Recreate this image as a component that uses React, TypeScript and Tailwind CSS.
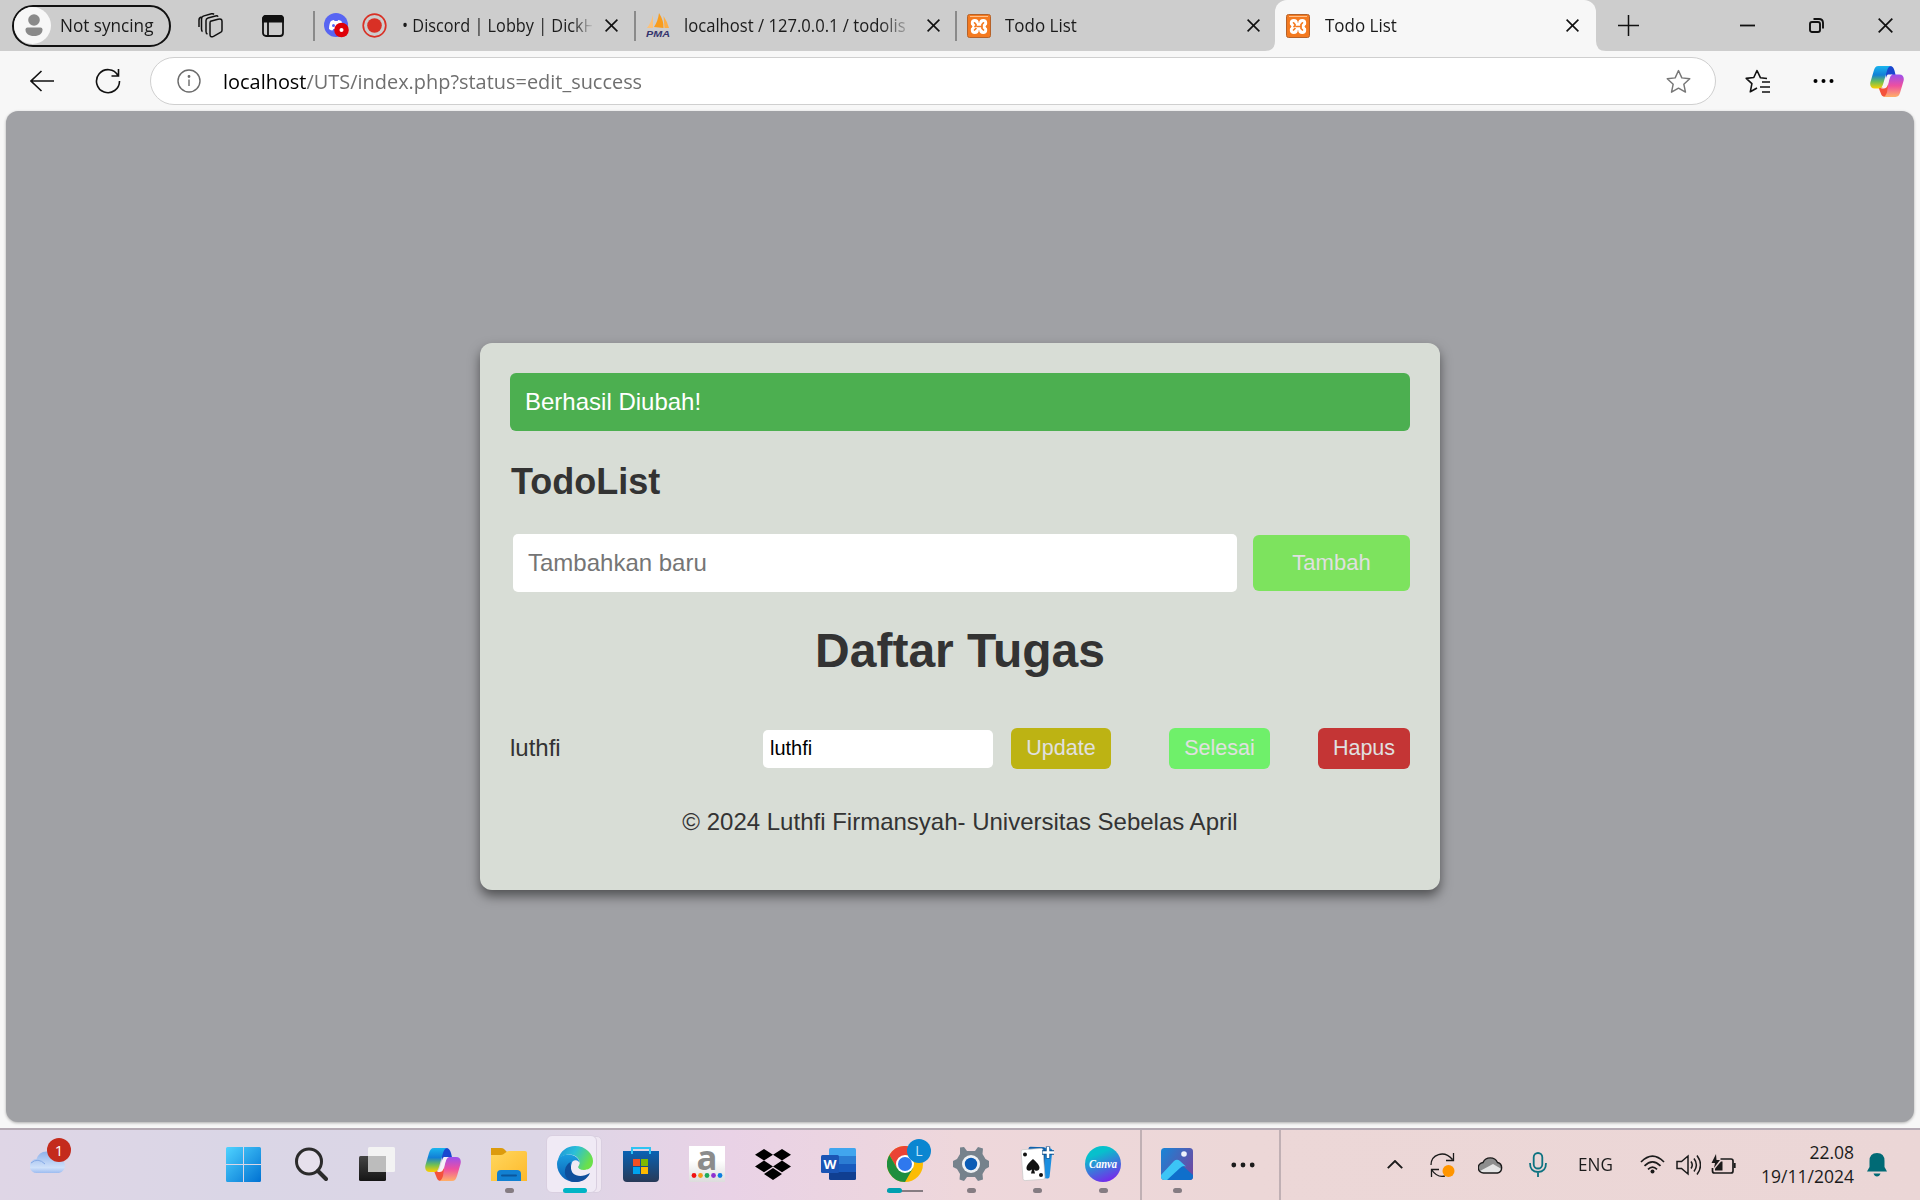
import type { ReactNode } from "react";

const ui = "font-['Open_Sans','Noto_Sans',sans-serif]";

function Close({ s = 13, w = 1.6 }: { s?: number; w?: number }) {
  return (
    <svg width={s} height={s} viewBox="0 0 13 13" fill="none" stroke="#111" strokeWidth={w}>
      <path d="M.6.6 12.4 12.4M12.4.6.6 12.4" />
    </svg>
  );
}

function Xampp() {
  return (
    <svg width="24" height="24" viewBox="0 0 24 24">
      <rect x=".5" y=".5" width="23" height="23" rx="2" fill="#f47a20" stroke="#b5622a" />
      <path d="M3 2.500h18" stroke="#ffc08a" />
      <g fill="#fff">
        <circle cx="7.800" cy="9" r="4" />
        <circle cx="16.200" cy="9" r="4" />
        <circle cx="7.800" cy="16" r="4" />
        <circle cx="16.200" cy="16" r="4" />
        <path d="M6 9h12v7H6Z" />
      </g>
      <path d="M3 12.500 5 11v3ZM21 12.500 19 11v3Z" fill="#f47a20" />
      <path d="M7.500 8.800 9 10.500v1.500l-1 .6M7.500 16 9 14.500M16.500 8.800 15 10.500v4l1.500 1.500M10.500 12.500H15" fill="none" stroke="#f47a20" strokeWidth="1.700" strokeLinecap="round" />
    </svg>
  );
}

function Copilot({ id, w = 36, h = 33 }: { id: string; w?: number; h?: number }) {
  return (
    <svg width={w} height={h} viewBox="0 0 36 33" preserveAspectRatio="none">
      <defs>
        <linearGradient id={id + "a"} x1="0" y1="0" x2="0" y2="1">
          <stop offset="0" stopColor="#19b5ee" />
          <stop offset=".4" stopColor="#127fd6" />
          <stop offset=".7" stopColor="#6fbf55" />
          <stop offset="1" stopColor="#ffd000" />
        </linearGradient>
        <linearGradient id={id + "b"} x1="0" y1="0" x2="0" y2="1">
          <stop offset="0" stopColor="#9b50ee" />
          <stop offset=".5" stopColor="#ee4fa0" />
          <stop offset="1" stopColor="#ffb067" />
        </linearGradient>
      </defs>
      <path d="M16 0h5c3 0 4 2 5 5l1.200 5H22c-3 0-4 2-5 5Z" fill="#1a47cf" />
      <path d="M9 23h6c2 0 3-1 4-4l1 14h-4c-3 0-4-2-5-5Z" fill="#f4523b" />
      <path d="M9 0h13c-2 .5-3 2-4 5l-4 14c-1 3-2 5-5 5H5c-4 0-5.500-3-4.500-7L4 5c1-3 2-5 5-5Z" fill={"url(#" + id + "a)"} />
      <path d="M23 9h8c4 0 5.500 3 4.500 7L32 28c-1 3-2 5-5 5H14c2-.5 3-2 4-5l2-14c1-3 1.500-5 3-5Z" fill={"url(#" + id + "b)"} />
      <path d="M19 9h5c-2 .8-2.500 2-3.400 5l-2 6.500c-.8 2.500-2 3.500-4 3.500h-3c2-.8 2.600-2 3.400-5l2-6.500c.5-1.700 1-3 2-3.500Z" fill="#f6f0f8" />
    </svg>
  );
}

function TabBar() {
  return (
    <div className="flex h-[51px] bg-[#cdcdcd] text-[17.500px] text-[#1b1b1b]">
      <div className="flex w-[313px] shrink-0 items-center pl-3">
        <div className="flex h-[42px] w-[159px] items-center rounded-full border-2 border-[#111]">
          <svg width="37" height="37" viewBox="0 0 37 37">
            <circle cx="18.500" cy="18.500" r="18.500" fill="#f7f7f7" />
            <circle cx="20" cy="13" r="5.800" fill="#8a8a8a" />
            <path d="M13.500 20.500h13a2 2 0 0 1 2 2c0 4-3 6.500-8.500 6.500s-8.500-2.500-8.500-6.500a2 2 0 0 1 2-2Z" fill="#8a8a8a" />
          </svg>
          <span className="ml-[9px] origin-left scale-x-[.98] whitespace-nowrap">Not syncing</span>
        </div>
        <svg className="ml-[27px]" width="25" height="25" viewBox="0 0 25 25" fill="none" stroke="#111" strokeWidth="1.500" strokeLinejoin="round">
          <path d="M12.500 8.300 20 6.200q4-.9 4 2v9q0 1.500-1.500 2.200l-7 4q-3.500 1.500-3.500-2v-11q0-1.600.5-2.100Z" />
          <path d="M20 3.800q-.5-1.300-2.500-.8L10 5q-2 .6-2 2.500v11q0 2 1.500 2.500M16 1.400q-1-1-2.500-.6L6 2.900Q3.500 3.600 3.500 6v10q0 2 1 2.600M3.500 4Q1 4.500 1 7v7" />
        </svg>
        <svg className="ml-[39px]" width="22" height="22" viewBox="0 0 22 22" fill="none" stroke="#111" strokeWidth="1.800">
          <rect x="1" y="1" width="20" height="20" rx="3" />
          <path d="M1 4q0-3 3-3h14q3 0 3 3v2.500H1Z" fill="#111" />
          <path d="M6 7v14" />
        </svg>
      </div>
      <div className="flex w-[321px] shrink-0 items-center">
        <i className="h-[30px] w-[2px] bg-[#8a8a8a]" />
        <svg className="ml-[9px]" width="25" height="25" viewBox="0 0 25 25">
          <circle cx="12" cy="12" r="12" fill="#5865f2" />
          <path d="M5 16c0-4 1-7 2-8q2-1 3-1l.6 1h3l.6-1q1 0 3 1c1 1 2 4 2 8q-2 1.500-3.500 1.600l-1-1.500H9.500l-1 1.500Q7 17.500 5 16Z" fill="#fff" />
          <circle cx="9.500" cy="12.500" r="1.500" fill="#5865f2" />
          <circle cx="17.500" cy="17" r="7.300" fill="#df0008" />
          <circle cx="17.500" cy="17" r="2" fill="#fff" />
        </svg>
        <svg className="ml-[13px]" width="25" height="25" viewBox="0 0 25 25">
          <circle cx="12.500" cy="12.500" r="11.300" fill="none" stroke="#d93025" strokeWidth="1.700" />
          <circle cx="12.500" cy="12.500" r="7.300" fill="#d93025" />
        </svg>
        <div className="ml-[15px] w-[190px] [mask-image:linear-gradient(90deg,#000_90%,transparent_101%)]">
          <span className="block w-[200px] origin-left scale-x-[.93] whitespace-nowrap">• Discord | Lobby | DickH</span>
        </div>
        <div className="ml-[13px]"><Close /></div>
      </div>
      <div className="flex w-[321px] shrink-0 items-center">
        <i className="h-[30px] w-[2px] bg-[#8a8a8a]" />
        <svg className="ml-[9px]" width="26" height="25" viewBox="0 0 26 25">
          <path d="M8 2v13H2Q6 10 8 2Z" fill="#fbc27b" />
          <path d="M14 0q5 8 4.500 15L9 14q4-6 5-14Z" fill="#f89c1c" />
          <path d="M18.500 3q4 6 5.500 12h-4.500Z" fill="#fdae45" />
          <text x="1" y="24" fontSize="9.500" fontStyle="italic" fontWeight="bold" fill="#35356e" textLength="24" lengthAdjust="spacingAndGlyphs" fontFamily="Liberation Sans">PMA</text>
        </svg>
        <div className="ml-[13px] w-[228px] [mask-image:linear-gradient(90deg,#000_86%,transparent_101%)]">
          <span className="block w-[240px] origin-left scale-x-[.95] whitespace-nowrap">localhost / 127.0.0.1 / todolis</span>
        </div>
        <div className="ml-[15px]"><Close /></div>
      </div>
      <div className="flex w-[320px] shrink-0 items-center">
        <i className="h-[30px] w-[2px] bg-[#8a8a8a]" />
        <div className="ml-[10px]"><Xampp /></div>
        <span className="ml-[14px] origin-left scale-x-[.97]">Todo List</span>
        <div className="mr-[15px] ml-auto"><Close /></div>
      </div>
      <div className="relative flex w-[321px] shrink-0 items-center rounded-t-[12px] bg-[#f7f7f7] pl-[11px]">
        <svg className="absolute bottom-0 -left-[10px]" width="10" height="10"><path d="M10 0v10H0Q10 10 10 0Z" fill="#f7f7f7" /></svg>
        <svg className="absolute -right-[10px] bottom-0" width="10" height="10"><path d="M0 0v10h10Q0 10 0 0Z" fill="#f7f7f7" /></svg>
        <Xampp />
        <span className="ml-[15px] origin-left scale-x-[.97]">Todo List</span>
        <div className="mr-[17px] ml-auto"><Close /></div>
      </div>
      <div className="flex flex-1 items-center pl-[22px]">
        <svg width="21" height="21" viewBox="0 0 21 21" stroke="#111" strokeWidth="1.500"><path d="M10.500 0v21M0 10.500h21" /></svg>
        <svg className="ml-[101px]" width="15" height="15" viewBox="0 0 15 15" stroke="#111" strokeWidth="1.800"><path d="M0 7.500h15" /></svg>
        <svg className="ml-[54px]" width="15" height="15" viewBox="0 0 15 15" fill="none" stroke="#111" strokeWidth="1.900">
          <rect x="1" y="4" width="10" height="10" rx="2" />
          <path d="M4.500 1H10q4 0 4 4v5.500" />
        </svg>
        <div className="ml-[54px]"><Close s={15} w={1.5} /></div>
      </div>
    </div>
  );
}

const star = "M12 1.500 15.200 8.500 22.800 9.400 17.100 14.600 18.700 22.200 12 18.400 5.300 22.200 6.900 14.600 1.200 9.400 8.800 8.500Z";

function Toolbar() {
  return (
    <div className="flex h-[60px] items-center bg-[#f7f7f7] pl-[30px]">
      <svg width="24" height="22" viewBox="0 0 24 22" fill="none" stroke="#111" strokeWidth="1.600"><path d="M24 11H1M11.500 1 1 11l10.500 10" /></svg>
      <svg className="ml-[41px]" width="26" height="26" viewBox="0 0 26 26" fill="none" stroke="#111" strokeWidth="1.600">
        <path d="M23 7.500A11.500 11.500 0 1 0 24.500 13M23.500 1v7h-7" />
      </svg>
      <div className="ml-[29px] flex h-[48px] w-[1566px] items-center rounded-full border border-[#cfcfcf] bg-white pr-[24px] pl-[26px]">
        <svg width="24" height="24" viewBox="0 0 24 24" fill="none" stroke="#6b6b6b" strokeWidth="1.400">
          <circle cx="12" cy="12" r="11" /><path d="M12 10.500V17" /><circle cx="12" cy="7.500" r=".7" fill="#6b6b6b" />
        </svg>
        <span className="ml-[22px] origin-left scale-x-[.972] text-[20.500px] whitespace-nowrap text-[#6f6f6f]"><span className="text-black">localhost</span>/UTS/index.php?status=edit_success</span>
        <svg className="ml-auto" width="25" height="25" viewBox="0 0 24 24" fill="none" stroke="#777" strokeWidth="1.400" strokeLinejoin="round"><path d={star} /></svg>
      </div>
      <svg className="ml-[29px]" width="26" height="25" viewBox="0 0 26 25" fill="none" stroke="#111" strokeWidth="1.600" strokeLinejoin="round">
        <path d="M22 9.500 15.500 8.800 12 1.500 8.800 8.500 1.200 9.400 6.900 14.600 5.300 22.800 12 19M17 13h8M15 18H25M17 23h8" />
      </svg>
      <svg className="ml-[42px]" width="21" height="6" viewBox="0 0 21 6"><circle cx="2.500" cy="3" r="2" /><circle cx="10.500" cy="3" r="2" /><circle cx="18.500" cy="3" r="2" /></svg>
      <div className="ml-[36px]"><Copilot id="top" w={34} h={31} /></div>
    </div>
  );
}

function TodoCard() {
  return (
    <div className="mt-[232px] h-[547px] w-[960px] rounded-[12px] bg-[#d8ddd6] p-[30px] text-[24px] leading-[28px] text-[#333] shadow-[0_6px_12px_rgba(0,0,0,0.5)]">
      <div className="flex h-[58px] items-center rounded-[6px] bg-[#4caf50] px-[15px] text-white">Berhasil Diubah!</div>
      <h2 className="mt-[30px] ml-[1px] text-[36px] leading-[41px] font-bold">TodoList</h2>
      <div className="mt-[32px] flex items-center justify-between pl-[3px]">
        <input className="h-[58px] w-[724px] rounded-[5px] bg-white px-[15px] placeholder:text-[#757575]" placeholder="Tambahkan baru" />
        <button className="h-[56px] w-[157px] rounded-[6px] bg-[#7de35e] text-[22px] text-[#e0e0e0]">Tambah</button>
      </div>
      <h1 className="mt-[31px] text-center text-[48px] leading-[56px] font-bold">Daftar Tugas</h1>
      <div className="mt-[49px] flex h-[41px] items-center">
        <span className="w-[253px] pb-[2px]">luthfi</span>
        <input className="h-[38px] w-[230px] rounded-[5px] bg-white px-[7px] text-[20px] text-black" defaultValue="luthfi" />
        <button className="ml-[18px] h-[41px] w-[100px] rounded-[6px] bg-[#bdb313] pb-[2px] text-[21.500px] text-[#e0e0e0]">Update</button>
        <button className="ml-[58px] h-[41px] w-[101px] rounded-[6px] bg-[#6ff06a] pb-[2px] text-[21.500px] text-[#e0e0e0]">Selesai</button>
        <button className="ml-[48px] h-[41px] w-[92px] rounded-[6px] bg-[#c43535] pb-[2px] text-[21.500px] text-[#e0e0e0]">Hapus</button>
      </div>
      <p className="mt-[39px] text-center">© 2024 Luthfi Firmansyah- Universitas Sebelas April</p>
    </div>
  );
}

function Cell({ children, dot }: { children: ReactNode; dot?: boolean }) {
  return (
    <div className="relative flex h-[70px] w-[66px] shrink-0 items-center justify-center pb-[2px]">
      {children}
      {dot && <i className="absolute bottom-[7px] h-[5px] w-[9px] rounded-full bg-[#857c82]" />}
    </div>
  );
}

function Taskbar() {
  return (
    <div className="flex h-[72px] items-center border-t-2 border-[#b5aab4] bg-[linear-gradient(90deg,#dfd6e6_0%,#dad6e6_12%,#dcd6e6_28%,#e9d2e6_38%,#eed7db_50%,#ecd7d7_65%,#ebd6d6_100%)] text-[#1b1b1b]">
      <div className="relative h-[70px] w-[212px] shrink-0 pt-[20px] pl-[30px]">
        <svg width="36" height="24" viewBox="0 0 36 24">
          <defs><linearGradient id="cl" x1="0" y1="0" x2="0" y2="1"><stop stopColor="#8fb2ea" /><stop offset=".75" stopColor="#cfe1fa" /><stop offset="1" stopColor="#9dbcf0" /></linearGradient></defs>
          <path d="M7 23a7 7 0 0 1-.5-14A11 11 0 0 1 27 8a7.600 7.600 0 0 1 2 15Z" fill="url(#cl)" />
          <path d="M1 13q7-6 14 1" fill="none" stroke="#86aae6" />
        </svg>
        <span className="absolute top-[8px] left-[47px] flex size-[24px] items-center justify-center rounded-full bg-[#c42b1c] text-[15px] leading-none text-white">1</span>
      </div>
      <Cell>
        <svg className="-translate-x-[2px]" width="35" height="35" viewBox="0 0 35 35">
          <defs><linearGradient id="win" gradientUnits="userSpaceOnUse" x1="0" y1="0" x2="35" y2="35"><stop stopColor="#4fd3ff" /><stop offset="1" stopColor="#0071d2" /></linearGradient></defs>
          <path fill="url(#win)" d="M1.500 0H17v17H0V1.500Q0 0 1.500 0ZM18 0h15.500Q35 0 35 1.500V17H18ZM0 18h17v17H1.500Q0 35 0 33.500ZM18 18h17v15.500q0 1.500-1.500 1.500H18Z" />
        </svg>
      </Cell>
      <Cell>
        <svg width="34" height="35" viewBox="0 0 34 35" fill="none" stroke="#2b2b2b">
          <circle cx="15" cy="14.500" r="12.500" strokeWidth="3" fill="#e6e0ec" /><path d="m24 24 8 8" strokeWidth="4" strokeLinecap="round" />
        </svg>
      </Cell>
      <Cell>
        <svg width="36" height="34" viewBox="0 0 36 34">
          <defs><linearGradient id="tv" x1="0" y1="0" x2="0" y2="1"><stop stopColor="#444" /><stop offset="1" stopColor="#151515" /></linearGradient></defs>
          <rect y="9" width="27" height="25" rx="1.500" fill="url(#tv)" /><rect x="9" width="27" height="25" rx="1.500" fill="#f3f3f3" /><path d="M9 9h18v16H9Z" fill="#bcbcbc" />
        </svg>
      </Cell>
      <Cell><Copilot id="tb" /></Cell>
      <Cell dot>
        <svg width="36" height="33" viewBox="0 0 36 33">
          <defs><linearGradient id="fo" x1="0" y1="0" x2="1" y2="1"><stop stopColor="#ffd75e" /><stop offset="1" stopColor="#fdb92b" /></linearGradient></defs>
          <path d="M0 0h10q2 0 3 1l3 3v5H0Z" fill="#dc9b0c" />
          <path d="M0 7h10q2 0 4-2t4-2h16q2 0 2 2v28H0Z" fill="url(#fo)" />
          <path d="M6 33v-7q0-4 4-4h16q4 0 4 4v7Z" fill="#1180d2" /><path d="M11 27.500h14" stroke="#0b569c" strokeWidth="2" strokeLinecap="round" />
        </svg>
      </Cell>
      <Cell>
        <i className="absolute top-[6px] left-[12px] h-[57px] w-[48px] rounded-[5px] border border-[#d9cfe0] bg-[#efe7f2]" />
        <i className="absolute top-[5px] left-[4px] h-[58px] w-[51px] rounded-[6px] border border-[#d9cfe0] bg-[#f0eaf5]" />
        <i className="absolute bottom-[7px] h-[5px] w-[24px] rounded-full bg-[#00b4c5]" />
        <svg className="relative" width="36" height="36" viewBox="0 0 36 36">
          <defs>
            <linearGradient id="e1" x1="0" y1="0" x2="1" y2=".4"><stop stopColor="#1d8fd8" /><stop offset=".5" stopColor="#2bbfd8" /><stop offset="1" stopColor="#6be04a" /></linearGradient>
            <linearGradient id="e2" x1="0" y1="0" x2="0" y2="1"><stop stopColor="#1b9fe0" /><stop offset="1" stopColor="#0b5bb2" /></linearGradient>
          </defs>
          <path d="M1 14C3 5 10 0 18 0c11 0 18 8 18 15 0 6-4 9-9 9-4 0-6-1.500-6-3 0-1 1.500-2 1.500-4.500 0-4-4-8-10-8C7 8.500 2.500 11 1 14Z" fill="url(#e1)" />
          <path d="M0 18c0-6 5-9.500 11-9.500 7 0 11 4 11.500 8-5-3-9 1-8.500 6 .5 7 8 13 16 8C26 35 22 36 18 36 8 36 0 28 0 18Z" fill="url(#e2)" />
          <path d="M14 21c-1 8 9 12 19 6-3 7-9 9-15 9-7 0-11-6-10-12 .5-4 3-7 6-8-1 1.500-.5 4 0 5Z" fill="#0f4e9c" />
          <path d="M15.500 15.500c3-2.500 7-.5 7 2 0 1.500-1.500 2-1.500 4 .5 2.500 5 4 9 2l3 1.500c-7 4-16 2-18-4-.8-2-.5-4 .5-5.500Z" fill="#f0eaf5" />
        </svg>
      </Cell>
      <Cell>
        <svg width="36" height="35" viewBox="0 0 36 35">
          <defs><linearGradient id="st" x1="0" y1="0" x2="0" y2="1"><stop stopColor="#0a62b4" /><stop offset="1" stopColor="#283a58" /></linearGradient></defs>
          <path d="M9 7V1h18v6" fill="none" stroke="#2fc3f2" strokeWidth="2" />
          <path d="M0 4h36v27q0 4-4 4H4q-4 0-4-4Z" fill="url(#st)" />
          <path d="M9 1v6M27 1v6" stroke="#2fc3f2" strokeWidth="2" />
          <path d="M10 12h7v7h-7Z" fill="#f25022" /><path d="M18 12h7v7h-7Z" fill="#7fba00" /><path d="M10 20h7v7h-7Z" fill="#00a4ef" /><path d="M18 20h7v7h-7Z" fill="#ffb900" />
        </svg>
      </Cell>
      <Cell>
        <svg className="overflow-visible" width="36" height="36" viewBox="0 0 36 36">
          <defs><linearGradient id="am" x1="0" y1="0" x2="0" y2="1"><stop offset=".4" stopColor="#fff" /><stop offset="1" stopColor="#dcdcdc" /></linearGradient></defs>
          <rect width="36" height="36" fill="url(#am)" />
          <text x="7.500" y="23.500" fontSize="34" fontWeight="bold" fill="#8c8c8c" textLength="21" lengthAdjust="spacingAndGlyphs" fontFamily="Open Sans">a</text>
          <circle cx="5" cy="29.500" r="2.400" fill="#f01010" /><circle cx="11.500" cy="29.500" r="2.400" fill="#f59a1a" /><circle cx="18" cy="29.500" r="2.400" fill="#1faa59" /><circle cx="24.500" cy="29.500" r="2.400" fill="#8e30d0" /><circle cx="31" cy="29.500" r="2.400" fill="#0d7fe0" />
        </svg>
      </Cell>
      <Cell>
        <svg width="36" height="31" viewBox="0 0 36 31"><path d="m9 0 9 5.800-9 5.800L0 5.800ZM27 0l9 5.800-9 5.800-9-5.800ZM9 11.600l9 5.800-9 5.800-9-5.800ZM27 11.600l9 5.800-9 5.800-9-5.800ZM18 19l9 6-9 6-9-6Z" /></svg>
      </Cell>
      <Cell>
        <svg width="36" height="32" viewBox="0 0 36 32">
          <path d="M8 8V1.500Q8 0 9.500 0h24Q35 0 35 1.500V8Z" fill="#41a5ee" /><path d="M8 8h27v8H8Z" fill="#2b7cd3" /><path d="M8 16h27v8H8Z" fill="#185abd" /><path d="M8 24h27v6.500q0 1.500-1.500 1.500h-24Q8 32 8 30.500Z" fill="#103f91" />
          <rect y="7" width="18" height="18" rx="1.500" fill="#1b55b5" />
          <text x="2.500" y="20.500" fontSize="13" fontWeight="bold" fill="#fff" textLength="13" lengthAdjust="spacingAndGlyphs" fontFamily="Open Sans">W</text>
        </svg>
      </Cell>
      <Cell>
        <svg width="36" height="36" viewBox="0 0 36 36">
          <circle cx="18" cy="18" r="18" fill="#fbbc04" />
          <path d="M18 18V9h15.600A18 18 0 0 0 2.400 9l7.800 13.500Z" fill="#ea4335" />
          <path d="M2.400 9A18 18 0 0 0 18 36l7.800-13.500L18 18l-7.800 4.500Z" fill="#1e8e3e" />
          <circle cx="18" cy="18" r="9" fill="#fff" /><circle cx="18" cy="18" r="7" fill="#2f78ee" />
        </svg>
        <span className="absolute top-[9px] left-[35px] flex size-[24px] items-center justify-center rounded-full bg-[#0a86d1] text-[14px] leading-none text-[#bfe4fa]">L</span>
        <i className="absolute bottom-[8px] left-[15px] h-[2px] w-[36px] bg-[#857c82]" />
        <i className="absolute bottom-[7px] left-[15px] h-[5px] w-[15px] rounded-full bg-[#00a0b0]" />
      </Cell>
      <Cell dot>
        <svg width="36" height="36" viewBox="0 0 36 36">
          <path d="M7 1.500 11 1l3 4h8l3-4 5 1.500-.5 5.500 3 5 3.500 2v6l-3.500 2-3 5 .5 5.500L25 35l-3-4h-8l-3 4-4.500-1.500.5-5.500-3-5L0 21v-6l4-2 3-5Z" fill="#76828c" />
          <circle cx="18" cy="18" r="9" fill="#eef1f4" /><circle cx="18" cy="18" r="6.200" fill="#0b5cb5" />
        </svg>
      </Cell>
      <Cell dot>
        <svg width="34" height="36" viewBox="0 0 34 36">
          <rect x="15" y="2" width="16" height="30" rx="2" fill="#1b8fe0" transform="rotate(6 24 17)" />
          <rect x="8" y="1" width="17" height="30" rx="2" fill="#0e62ad" transform="rotate(2 16 17)" />
          <rect x="2" y="3" width="22" height="31" rx="2" fill="#fff" stroke="#c9c9c9" strokeWidth=".7" transform="rotate(-4 13 18)" />
          <path d="M13 13q6 5 6.500 8.500c0 4-4 4-5.500 2l1 4h-4l1-4c-2 2-6 1.500-5.500-2Q7 18 13 13Z" fill="#111" />
          <circle cx="5" cy="8.500" r="2" fill="#111" /><circle cx="21" cy="29" r="2" fill="#111" />
          <path d="M28 .5v12M22 6.500h12" stroke="#0d4f8c" strokeWidth="4.400" />
          <path d="M28 1v11M22.500 6.500H34" stroke="#fff" strokeWidth="2.600" />
        </svg>
      </Cell>
      <Cell dot>
        <svg width="36" height="36" viewBox="0 0 36 36">
          <defs><linearGradient id="ca" x1=".3" y1="0" x2=".7" y2="1"><stop offset=".2" stopColor="#07c0cc" /><stop offset="1" stopColor="#7a22ec" /></linearGradient></defs>
          <circle cx="18" cy="18" r="18" fill="url(#ca)" />
          <text x="4" y="22" fontSize="12" fontStyle="italic" fontWeight="bold" fill="#fff" textLength="28" lengthAdjust="spacingAndGlyphs" fontFamily="Liberation Serif">Canva</text>
        </svg>
      </Cell>
      <div className="ml-[4px] flex h-[70px] w-[141px] shrink-0 items-center border-x-2 border-[#c0b0b4] pl-[2px]">
        <Cell dot>
          <svg width="32" height="32" viewBox="0 0 32 32">
            <defs>
              <linearGradient id="ph" x1="0" y1="0" x2="1" y2=".6"><stop stopColor="#1686d8" /><stop offset="1" stopColor="#6b4ba4" /></linearGradient>
              <clipPath id="pc"><rect width="32" height="32" rx="3.500" /></clipPath>
            </defs>
            <g clipPath="url(#pc)">
              <rect width="32" height="32" fill="url(#ph)" />
              <path d="M4 32 14 20q2-2 5-2 2-1 4 1l10 9v6Z" fill="#0f6fcb" />
              <path d="M0 27 13 13q3-2.500 6 0l6 5.500q-3-1.500-6 1.500L6 32H0Z" fill="#3cc5f6" />
            </g>
            <circle cx="23" cy="6" r="2.800" fill="#eef3fb" />
          </svg>
        </Cell>
        <svg className="ml-[21px]" width="24" height="6" viewBox="0 0 24 6" fill="#1b1b1b"><circle cx="2.800" cy="3" r="2.400" /><circle cx="12" cy="3" r="2.400" /><circle cx="21.200" cy="3" r="2.400" /></svg>
      </div>
      <div className="flex h-[70px] flex-1 items-center pb-[1px]">
        <svg className="ml-[106px]" width="16" height="9" viewBox="0 0 16 9" fill="none" stroke="#1b1b1b" strokeWidth="1.900"><path d="M.8 8.200 8 1l7.200 7.200" /></svg>
        <svg className="ml-[27px]" width="25" height="26" viewBox="0 0 25 26" fill="none" stroke="#1b1b1b" strokeWidth="1.300">
          <path d="M1 13C1 2.500 14-2.500 22.500 7.500M23.500 1v7.500H16M15 24Q7 26 1.500 17.500M1.500 25v-7.500H9" />
          <circle cx="18.500" cy="19" r="6" fill="#ff9500" stroke="none" />
        </svg>
        <svg className="ml-[23px]" width="25" height="18" viewBox="0 0 25 18">
          <path d="M6 17A5.200 5.200 0 0 1 5 6.500a8 8 0 0 1 14.500 0A5.400 5.400 0 0 1 19.500 17Z" fill="#8d8d8d" />
          <path d="m2 15 13-7 8.500 5q-1 4-4 4H6q-2.500 0-4-2Z" fill="#e4e4e4" />
          <path d="M6 17A5.200 5.200 0 0 1 5 6.500a8 8 0 0 1 14.500 0A5.400 5.400 0 0 1 19.500 17Z" fill="none" stroke="#1b1b1b" strokeWidth="1.400" />
        </svg>
        <svg className="ml-[26px]" width="18" height="25" viewBox="0 0 18 25" fill="none" stroke="#0d7280" strokeWidth="1.800"><rect x="4.700" y="1" width="8.600" height="15.500" rx="4.300" /><path d="M1 11q0 9 8 9t8-9M9 20v5" /></svg>
        <span className="ml-[31px] w-[37px] origin-left scale-x-[.95] text-[18px]">ENG</span>
        <svg className="ml-[25px]" width="25" height="19" viewBox="0 0 25 19" fill="none" stroke="#1b1b1b" strokeWidth="1.700"><path d="M1 7q11.500-11.500 23 0M4.500 10.800q8-8 16 0M8 14.300q4.500-4.500 9 0" /><circle cx="12.500" cy="16.500" r="2" fill="#1b1b1b" stroke="none" /></svg>
        <svg className="ml-[11px]" width="25" height="22" viewBox="0 0 25 22" fill="none" stroke="#1b1b1b" strokeWidth="1.500"><path d="M1 7.500h4.500L12 2v18l-6.500-5.500H1ZM15 7.500q2.500 3.500 0 7M18 4.500q4.800 6.500 0 13M21 1.500q7 9.500 0 19" /></svg>
        <svg className="ml-[10px]" width="25" height="22" viewBox="0 0 25 22" fill="none" stroke="#1b1b1b" strokeWidth="1.700">
          <path d="M9.500 5H20q2 0 2 2v10q0 2-2 2H3.500q-2 0-2-2v-3M23.800 9v5" /><path d="m5 0-4.500 9H4l-1 5 6-8H5.500Z" fill="#1b1b1b" stroke="none" /><path d="M4 16.500h7.500V7.500H10L4 14.500Z" fill="#1b1b1b" stroke="none" />
        </svg>
        <div className="ml-[18px] w-[100px] shrink-0 pb-[2px] text-right text-[17.500px] leading-[24px] whitespace-nowrap">
          <div>22.08</div><div>19/11/2024</div>
        </div>
        <svg className="ml-[13px]" width="20" height="24" viewBox="0 0 20 24" fill="#006a75"><path d="M10 0q7.500 0 7.500 8v6l2.500 4.500H0L2.500 14V8q0-8 7.500-8ZM6.500 20.500h7q-1 3-3.500 3t-3.500-3Z" /></svg>
      </div>
    </div>
  );
}

export default function App() {
  return (
    <div className={"flex h-[1200px] w-[1920px] flex-col overflow-hidden bg-[#f7f7f7] " + ui}>
      <TabBar />
      <Toolbar />
      <main className="mx-[6px] flex h-[1011px] justify-center rounded-[12px] bg-[#a0a1a5] font-['Liberation_Sans',Arial,sans-serif] shadow-[0_1px_3px_rgba(0,0,0,0.3)]">
        <TodoCard />
      </main>
      <div className="mt-auto"><Taskbar /></div>
    </div>
  );
}
